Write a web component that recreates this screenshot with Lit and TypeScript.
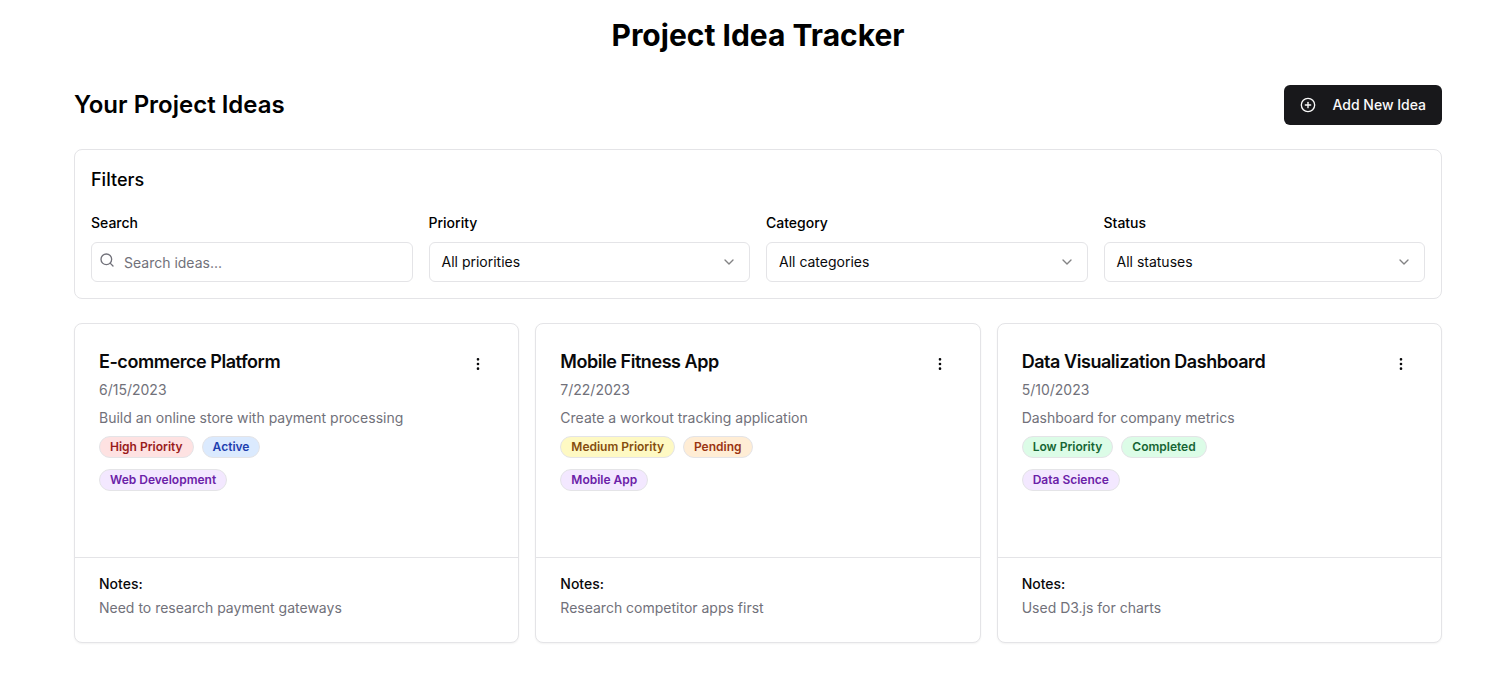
import { LitElement, html, css, svg } from "lit";
import { customElement, property } from "lit/decorators.js";

interface Tag {
  label: string;
  tone: string;
}

interface Idea {
  title: string;
  date: string;
  description: string;
  priority: Tag;
  status: Tag;
  category: string;
  notes: string;
}

const ideas: Idea[] = [
  {
    title: "E-commerce Platform",
    date: "6/15/2023",
    description: "Build an online store with payment processing",
    priority: { label: "High Priority", tone: "red" },
    status: { label: "Active", tone: "blue" },
    category: "Web Development",
    notes: "Need to research payment gateways",
  },
  {
    title: "Mobile Fitness App",
    date: "7/22/2023",
    description: "Create a workout tracking application",
    priority: { label: "Medium Priority", tone: "yellow" },
    status: { label: "Pending", tone: "orange" },
    category: "Mobile App",
    notes: "Research competitor apps first",
  },
  {
    title: "Data Visualization Dashboard",
    date: "5/10/2023",
    description: "Dashboard for company metrics",
    priority: { label: "Low Priority", tone: "green" },
    status: { label: "Completed", tone: "green" },
    category: "Data Science",
    notes: "Used D3.js for charts",
  },
];

const selects = [
  { label: "Priority", value: "All priorities" },
  { label: "Category", value: "All categories" },
  { label: "Status", value: "All statuses" },
];

const glyphs = {
  plus: svg`<circle cx="12" cy="12" r="10"/><path d="M8 12h8"/><path d="M12 8v8"/>`,
  search: svg`<circle cx="11" cy="11" r="8"/><path d="m21 21-4.3-4.3"/>`,
  chevron: svg`<path d="m6 9 6 6 6-6"/>`,
  more: svg`<circle cx="12" cy="12" r="1"/><circle cx="12" cy="5" r="1"/><circle cx="12" cy="19" r="1"/>`,
};

const icon = (name: keyof typeof glyphs) => html`
  <svg class="icon ${name}" viewBox="0 0 24 24" width="16" height="16" fill="none"
    stroke="currentColor" stroke-width="2" stroke-linecap="round" stroke-linejoin="round"
    aria-hidden="true">${glyphs[name]}</svg>`;

const base = css`
  * {
    box-sizing: border-box;
    margin: 0;
  }
  .icon {
    display: block;
    flex: none;
  }
  button {
    font: inherit;
    border: 0;
    background: none;
  }
`;

@customElement("idea-card")
export class IdeaCard extends LitElement {
  @property({ attribute: false }) idea!: Idea;

  static styles = [
    base,
    css`
      :host {
        display: flex;
        flex-direction: column;
        box-sizing: border-box;
        height: 320px;
        border: 1px solid #e4e4e7;
        border-radius: 8px;
        background: #fff;
        color: #09090b;
        box-shadow: 0 1px 2px rgba(0, 0, 0, 0.05);
        font-size: 14px;
        line-height: 20px;
      }
      .body {
        flex: 1;
        padding: 24px 24px 0;
      }
      .head {
        display: flex;
        justify-content: space-between;
        align-items: flex-start;
      }
      .title {
        font-size: 18px;
        line-height: 28px;
        font-weight: 600;
        letter-spacing: -0.45px;
      }
      .menu {
        display: flex;
        align-items: center;
        justify-content: center;
        width: 32px;
        height: 32px;
        padding: 0;
        color: #09090b;
      }
      .muted {
        color: #71717a;
      }
      .date {
        margin-bottom: 8px;
      }
      .tags {
        display: flex;
        gap: 8px;
        margin-top: 8px;
      }
      .tags + .tags {
        margin-top: 11px;
      }
      .tag {
        padding: 2px 10px;
        border: 1px solid #e4e4e7;
        border-radius: 999px;
        font-size: 12px;
        line-height: 16px;
        font-weight: 600;
      }
      .red { background: #fee2e2; color: #991b1b; }
      .blue { background: #dbeafe; color: #1e40af; }
      .yellow { background: #fef9c3; color: #854d0e; }
      .orange { background: #ffedd5; color: #9a3412; }
      .green { background: #dcfce7; color: #166534; }
      .purple { background: #f3e8ff; color: #6b21a8; }
      .foot {
        border-top: 1px solid #e4e4e7;
        padding: 16px 24px 24px;
      }
      .notes {
        font-weight: 500;
        margin-bottom: 4px;
      }
    `,
  ];

  render() {
    const i = this.idea;
    return html`
      <div class="body">
        <div class="head">
          <h3 class="title">${i.title}</h3>
          <button class="menu" aria-label="Open menu">${icon("more")}</button>
        </div>
        <p class="muted date">${i.date}</p>
        <p class="muted">${i.description}</p>
        <div class="tags">
          <span class="tag ${i.priority.tone}">${i.priority.label}</span>
          <span class="tag ${i.status.tone}">${i.status.label}</span>
        </div>
        <div class="tags"><span class="tag purple">${i.category}</span></div>
      </div>
      <div class="foot">
        <p class="notes">Notes:</p>
        <p class="muted">${i.notes}</p>
      </div>
    `;
  }
}

@customElement("app-root")
export class AppRoot extends LitElement {
  static styles = [
    base,
    css`
      :host {
        display: block;
        box-sizing: border-box;
        height: 695px;
        overflow: hidden;
        padding: 17px 59px 0 74px;
        background: #fff;
        color: #09090b;
        font-family: Inter, sans-serif;
        font-size: 14px;
        line-height: 20px;
      }
      .page-title {
        font-size: 30px;
        line-height: 36px;
        font-weight: 700;
        text-align: center;
        color: #000;
        margin-bottom: 32px;
      }
      .toolbar {
        display: flex;
        justify-content: space-between;
        align-items: center;
        margin-bottom: 24px;
      }
      .heading {
        font-size: 24px;
        line-height: 32px;
        font-weight: 600;
        color: #000;
      }
      .add {
        display: flex;
        align-items: center;
        gap: 16px;
        height: 40px;
        padding: 0 16px;
        border-radius: 6px;
        background: #18181b;
        color: #fafafa;
        font-weight: 500;
      }
      .filters {
        border: 1px solid #e4e4e7;
        border-radius: 8px;
        padding: 16px;
        margin-bottom: 24px;
      }
      .filters-title {
        font-size: 18px;
        line-height: 28px;
        font-weight: 500;
        color: #000;
        margin-bottom: 16px;
      }
      .fields {
        display: grid;
        grid-template-columns: repeat(4, minmax(0, 1fr));
        gap: 16px;
      }
      .label {
        line-height: 26px;
        font-weight: 500;
        color: #000;
        margin-bottom: 6px;
      }
      .control {
        display: flex;
        align-items: center;
        justify-content: space-between;
        width: 100%;
        height: 40px;
        padding: 0 12px;
        border: 1px solid #e4e4e7;
        border-radius: 6px;
        color: #09090b;
      }
      .chevron {
        opacity: 0.5;
      }
      .search-box {
        justify-content: flex-start;
        align-items: flex-start;
        gap: 9px;
        padding: 9px 7px;
        color: #71717a;
      }
      .query {
        flex: 1;
        min-width: 0;
        height: 22px;
        padding: 0;
        border: 0;
        outline: 0;
        background: none;
        font: inherit;
        line-height: 22px;
        color: #09090b;
      }
      .query::placeholder {
        color: #71717a;
        opacity: 1;
      }
      .cards {
        display: grid;
        grid-template-columns: repeat(3, minmax(0, 1fr));
        gap: 16px;
      }
    `,
  ];

  render() {
    return html`
      <h1 class="page-title">Project Idea Tracker</h1>
      <div class="toolbar">
        <h2 class="heading">Your Project Ideas</h2>
        <button class="add">${icon("plus")}<span>Add New Idea</span></button>
      </div>
      <section class="filters">
        <h3 class="filters-title">Filters</h3>
        <div class="fields">
          <div>
            <p class="label">Search</p>
            <div class="control search-box">
              ${icon("search")}
              <input class="query" placeholder="Search ideas..." />
            </div>
          </div>
          ${selects.map(
            (s) => html`<div>
              <p class="label">${s.label}</p>
              <button class="control"><span>${s.value}</span>${icon("chevron")}</button>
            </div>`
          )}
        </div>
      </section>
      <div class="cards">
        ${ideas.map((i) => html`<idea-card .idea=${i}></idea-card>`)}
      </div>
    `;
  }
}
